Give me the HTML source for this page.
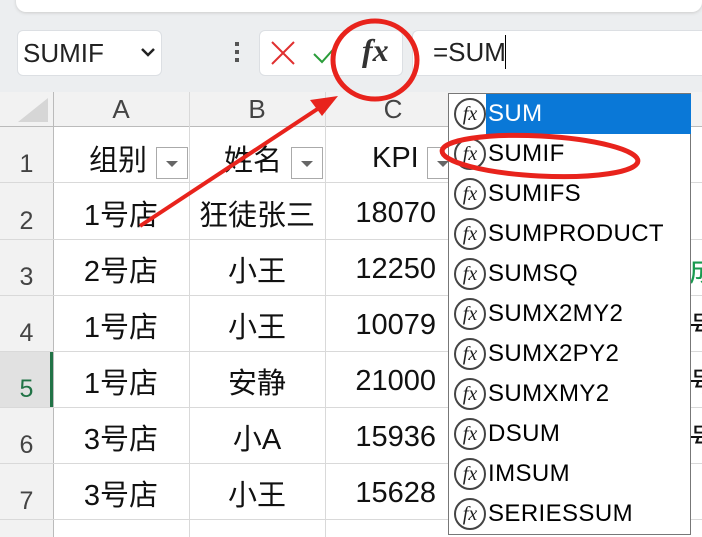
<!DOCTYPE html>
<html><head><meta charset="utf-8"><style>
*{margin:0;padding:0;box-sizing:border-box}
body{width:702px;height:537px;overflow:hidden;background:#eceef0;font-family:"Liberation Sans","Noto Sans CJK SC",sans-serif;position:relative}
.a{position:absolute}
.box{position:absolute;background:#fff;border:1px solid #dcdfe3;border-radius:6px}
.cell{position:absolute;display:flex;align-items:center;justify-content:center;font-size:29px;color:#111}
.hl{position:absolute;background:#d9d9d9}
.item{position:absolute;left:0;width:242px;height:40px;font-size:24px;letter-spacing:0.4px;color:#000;display:flex;align-items:center}
.ic{width:32px;height:32px;border:2px solid #444;border-radius:50%;margin-left:5px;margin-right:2px;font-family:"Liberation Serif",serif;font-style:italic;font-size:20px;display:flex;align-items:center;justify-content:center;color:#222;flex:none;letter-spacing:0}
.rh{position:absolute;left:0;width:53px;font-size:25px;color:#444;text-align:center}
.flt{position:absolute;width:32px;height:32px;border:1px solid #aaa;background:#fff}
.flt:after{content:"";position:absolute;left:9px;top:13px;border-left:6px solid transparent;border-right:6px solid transparent;border-top:6px solid #666}
</style></head><body>
<div class="a" style="left:16px;top:-10px;width:686px;height:22px;background:#fff;border-radius:10px;box-shadow:0 1px 3px #ccc"></div>
<div class="box" style="left:17px;top:30px;width:145px;height:46px"></div>
<div class="a" style="left:23px;top:38px;font-size:26px;color:#222">SUMIF</div>
<svg class="a" style="left:140px;top:46px" width="16" height="12"><path d="M2 3 L8 9 L14 3" stroke="#222" stroke-width="2.5" fill="none"/></svg>
<div class="a" style="left:235px;top:42px;width:4px;height:4px;background:#555;box-shadow:0 8px 0 #555,0 16px 0 #555"></div>
<div class="box" style="left:259px;top:30px;width:144px;height:46px"></div>
<svg class="a" style="left:268px;top:40px" width="32" height="26"><path d="M4 2 L26 24 M26 2 L4 24" stroke="#e03030" stroke-width="2" fill="none"/></svg>
<svg class="a" style="left:312px;top:42px" width="30" height="24"><path d="M2 12 L10 20 L26 2" stroke="#2a9d3a" stroke-width="2" fill="none"/></svg>
<div class="a" style="left:362px;top:32px;font-family:'Liberation Serif',serif;font-style:italic;font-weight:bold;font-size:32px;color:#333">fx</div>
<div class="box" style="left:412px;top:30px;width:300px;height:46px"></div>
<div class="a" style="left:433px;top:37px;font-size:26px;color:#222">=SUM</div>
<div class="a" style="left:505px;top:35px;width:1px;height:34px;background:#000"></div>

<div class="a" style="left:0;top:92px;width:702px;height:445px;background:#fff"></div>
<div class="a" style="left:0;top:92px;width:702px;height:34px;background:#f2f2f2"></div>
<div class="a" style="left:0;top:92px;width:53px;height:445px;background:#f2f2f2"></div>
<div class="a" style="left:0;top:351px;width:53px;height:56px;background:#e1e1e1;border-right:3px solid #217346"></div>
<svg class="a" style="left:14px;top:96px" width="36" height="28"><path d="M34 2 L34 26 L4 26 Z" fill="#d6d6d6"/></svg>
<div class="hl" style="left:53px;top:92px;width:1px;height:445px;background:#bbb"></div>
<div class="hl" style="left:0;top:126px;width:702px;height:1px;background:#bbb"></div>
<div class="hl" style="left:189px;top:92px;width:1px;height:445px"></div>
<div class="hl" style="left:325px;top:92px;width:1px;height:445px"></div>
<div class="hl" style="left:0;top:182px;width:702px;height:1px"></div>
<div class="hl" style="left:0;top:239px;width:702px;height:1px"></div>
<div class="hl" style="left:0;top:295px;width:702px;height:1px"></div>
<div class="hl" style="left:0;top:351px;width:702px;height:1px"></div>
<div class="hl" style="left:0;top:407px;width:702px;height:1px"></div>
<div class="hl" style="left:0;top:463px;width:702px;height:1px"></div>
<div class="hl" style="left:0;top:519px;width:702px;height:1px"></div>

<div class="cell" style="left:53px;top:92px;width:136px;height:34px;font-size:26px;color:#444">A</div>
<div class="cell" style="left:189px;top:92px;width:136px;height:34px;font-size:26px;color:#444">B</div>
<div class="cell" style="left:325px;top:92px;width:136px;height:34px;font-size:26px;color:#444">C</div>
<div class="rh" style="top:150px">1</div><div class="rh" style="top:207px">2</div><div class="rh" style="top:263px">3</div><div class="rh" style="top:319px">4</div><div class="rh" style="top:375px;color:#217346">5</div><div class="rh" style="top:431px">6</div><div class="rh" style="top:487px">7</div>

<div class="cell" style="left:53px;top:130px;width:130px;height:56px">组别</div>
<div class="flt" style="left:156px;top:147px"></div>
<div class="cell" style="left:189px;top:130px;width:128px;height:56px">姓名</div>
<div class="flt" style="left:291px;top:147px"></div>
<div class="cell" style="left:325px;top:130px;width:136px;height:56px;justify-content:flex-start;padding-left:47px">KPI</div>
<div class="flt" style="left:427px;top:147px"></div>

<div class="cell" style="left:53px;top:185px;width:136px;height:56px">1号店</div><div class="cell" style="left:189px;top:185px;width:136px;height:56px">狂徒张三</div><div class="cell" style="left:325px;top:185px;width:111px;height:56px;justify-content:flex-end">18070</div>
<div class="cell" style="left:53px;top:241px;width:136px;height:56px">2号店</div><div class="cell" style="left:189px;top:241px;width:136px;height:56px">小王</div><div class="cell" style="left:325px;top:241px;width:111px;height:56px;justify-content:flex-end">12250</div>
<div class="cell" style="left:53px;top:297px;width:136px;height:56px">1号店</div><div class="cell" style="left:189px;top:297px;width:136px;height:56px">小王</div><div class="cell" style="left:325px;top:297px;width:111px;height:56px;justify-content:flex-end">10079</div>
<div class="cell" style="left:53px;top:353px;width:136px;height:56px">1号店</div><div class="cell" style="left:189px;top:353px;width:136px;height:56px">安静</div><div class="cell" style="left:325px;top:353px;width:111px;height:56px;justify-content:flex-end">21000</div>
<div class="cell" style="left:53px;top:409px;width:136px;height:56px">3号店</div><div class="cell" style="left:189px;top:409px;width:136px;height:56px">小A</div><div class="cell" style="left:325px;top:409px;width:111px;height:56px;justify-content:flex-end">15936</div>
<div class="cell" style="left:53px;top:465px;width:136px;height:56px">3号店</div><div class="cell" style="left:189px;top:465px;width:136px;height:56px">小王</div><div class="cell" style="left:325px;top:465px;width:111px;height:56px;justify-content:flex-end">15628</div>
<div class="cell" style="left:689px;top:241px;width:30px;height:56px;color:#1a9a50;justify-content:flex-start">成</div>
<div class="cell" style="left:689px;top:297px;width:30px;height:56px;justify-content:flex-start">号</div>
<div class="cell" style="left:689px;top:353px;width:30px;height:56px;justify-content:flex-start">号</div>
<div class="cell" style="left:689px;top:409px;width:30px;height:56px;justify-content:flex-start">号</div>

<div class="a" style="left:448px;top:93px;width:243px;height:442px;background:#fff;border:1px solid #777">
<div class="a" style="left:37px;top:0;width:205px;height:40px;background:#0a78d7"></div>
<div class="item" style="top:0"><span class="ic">fx</span><span style="color:#fff">SUM</span></div>
<div class="item" style="top:40px"><span class="ic">fx</span>SUMIF</div>
<div class="item" style="top:80px"><span class="ic">fx</span>SUMIFS</div>
<div class="item" style="top:120px"><span class="ic">fx</span>SUMPRODUCT</div>
<div class="item" style="top:160px"><span class="ic">fx</span>SUMSQ</div>
<div class="item" style="top:200px"><span class="ic">fx</span>SUMX2MY2</div>
<div class="item" style="top:240px"><span class="ic">fx</span>SUMX2PY2</div>
<div class="item" style="top:280px"><span class="ic">fx</span>SUMXMY2</div>
<div class="item" style="top:320px"><span class="ic">fx</span>DSUM</div>
<div class="item" style="top:360px"><span class="ic">fx</span>IMSUM</div>
<div class="item" style="top:400px"><span class="ic">fx</span>SERIESSUM</div>
</div>

<svg class="a" style="left:0;top:0" width="702" height="537">
<ellipse cx="375" cy="60" rx="42" ry="39" stroke="#e8231c" stroke-width="5" fill="none"/>
<ellipse cx="540" cy="156" rx="98" ry="20" stroke="#e8231c" stroke-width="5" fill="none" transform="rotate(3 540 156)"/>
<path d="M140 226 L322 106" stroke="#e8231c" stroke-width="4"/>
<path d="M338 96 L310 100 L322 116 Z" fill="#e8231c"/>
</svg>
</body></html>
